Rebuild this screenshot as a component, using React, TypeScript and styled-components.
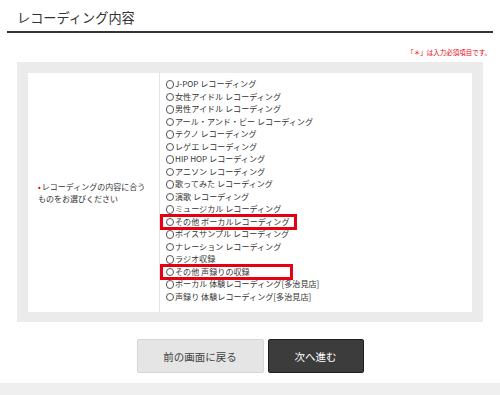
import React from "react";
import styled, { createGlobalStyle } from "styled-components";

const Global = createGlobalStyle`
  html, body { margin: 0; padding: 0; background: #fff; }
  body { font-family: "Noto Sans CJK JP", "Noto Sans", sans-serif; color: #333; }
`;

const Page = styled.div`
  width: 500px;
  height: 395px;
  overflow: hidden;
  display: flex;
  flex-direction: column;
`;

const Header = styled.h2`
  margin: 0 7px;
  padding: 9px 10px 4px;
  font-size: 13.2px;
  line-height: 18px;
  font-weight: 400;
  color: #333;
  border-bottom: 2px solid #333;
`;

const Note = styled.p`
  margin: 14px 9px 0 0;
  text-align: right;
  font-size: 6.5px;
  line-height: 10px;
  color: #e60012;
`;

const Panel = styled.div`
  margin: 5px 17px 0;
  background: #ebebeb;
  padding: 11px 11px 10px;
`;

const Table = styled.div`
  display: grid;
  grid-template-columns: 132px 1fr;
  background: #fff;
`;

const LabelCell = styled.div`
  display: flex;
  align-items: center;
  padding: 0 8px 0 10px;
  border-right: 1px solid #e4e4e4;
  font-size: 8px;
  line-height: 12px;
  color: #333;
`;

const Req = styled.span`
  color: #e60012;
  margin-right: 1px;
`;

const OptionsCell = styled.div`
  display: flex;
  flex-direction: column;
  align-items: flex-start;
  padding: 5px 0 9px 5px;
`;

const Option = styled.label<{ $boxWidth?: number }>`
  position: relative;
  display: inline-flex;
  align-items: center;
  height: 12.5px;
  font-size: 8.1px;
  line-height: 12.5px;
  color: #333;
  white-space: nowrap;
  &::after {
    content: "";
    display: ${(p) => (p.$boxWidth ? "block" : "none")};
    position: absolute;
    left: -5px;
    width: ${(p) => p.$boxWidth ?? 0}px;
    top: -2px;
    bottom: -2px;
    box-sizing: border-box;
    border: 3px solid #e60012;
    pointer-events: none;
  }
`;

const Radio = styled.span`
  box-sizing: border-box;
  width: 8.5px;
  height: 8.5px;
  border: 1px solid #555;
  border-radius: 50%;
  background: #fff;
  margin: 0 1px 0 0.5px;
  flex: none;
`;

const Buttons = styled.div`
  display: flex;
  justify-content: center;
  gap: 4px;
  margin-top: 17px;
`;

const Button = styled.button<{ $primary?: boolean }>`
  box-sizing: border-box;
  height: 34px;
  width: ${(p) => (p.$primary ? "96px" : "127px")};
  border-radius: 2px;
  border: 1px solid ${(p) => (p.$primary ? "#1e1e1e" : "#d6d6d6")};
  background: ${(p) => (p.$primary ? "#3c3c3c" : "#e5e5e5")};
  color: ${(p) => (p.$primary ? "#fff" : "#444")};
  font-family: "Noto Sans CJK JP", sans-serif;
  font-size: 10.5px;
  padding: 0;
  cursor: pointer;
`;

const Footer = styled.div`
  margin-top: 10px;
  flex: 1;
  background: #efefef;
`;

const options: { text: string; boxWidth?: number }[] = [
  { text: "J-POP レコーディング" },
  { text: "女性アイドル レコーディング" },
  { text: "男性アイドル レコーディング" },
  { text: "アール・アンド・ビー レコーディング" },
  { text: "テクノ レコーディング" },
  { text: "レゲエ レコーディング" },
  { text: "HIP HOP レコーディング" },
  { text: "アニソン レコーディング" },
  { text: "歌ってみた レコーディング" },
  { text: "演歌 レコーディング" },
  { text: "ミュージカル レコーディング" },
  { text: "その他 ボーカルレコーディング", boxWidth: 137 },
  { text: "ボイスサンプル レコーディング" },
  { text: "ナレーション レコーディング" },
  { text: "ラジオ収録" },
  { text: "その他 声録りの収録", boxWidth: 133 },
  { text: "ボーカル 体験レコーディング[多治見店]" },
  { text: "声録り 体験レコーディング[多治見店]" },
];

export default function App() {
  return (
    <Page>
      <Global />
      <Header>レコーディング内容</Header>
      <Note>「＊」は入力必須項目です。</Note>
      <Panel>
        <Table>
          <LabelCell>
            <div>
              <Req>•</Req>レコーディングの内容に合う
              <br />
              ものをお選びください
            </div>
          </LabelCell>
          <OptionsCell>
            {options.map((o) => (
              <Option key={o.text} $boxWidth={o.boxWidth}>
                <Radio />
                {o.text}
              </Option>
            ))}
          </OptionsCell>
        </Table>
      </Panel>
      <Buttons>
        <Button>前の画面に戻る</Button>
        <Button $primary>次へ進む</Button>
      </Buttons>
      <Footer />
    </Page>
  );
}
